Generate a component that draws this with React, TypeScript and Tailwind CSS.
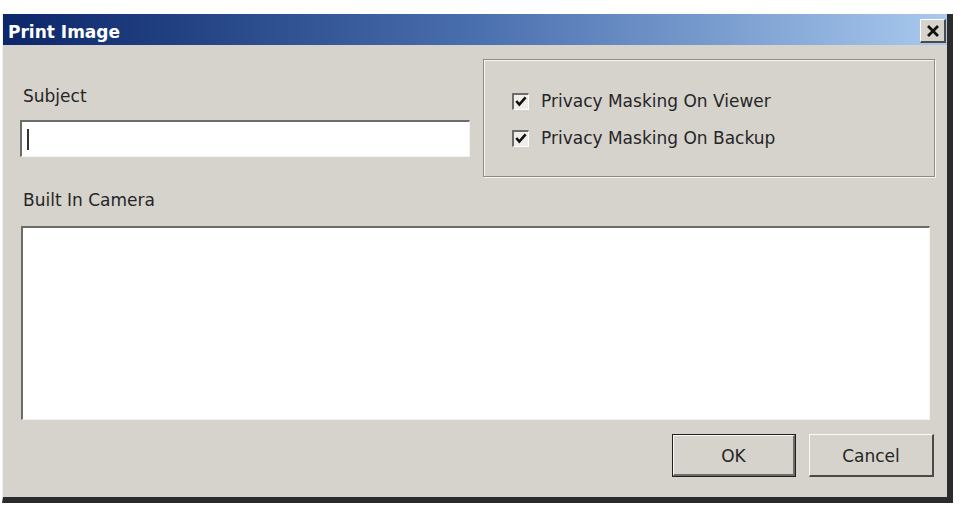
import React from 'react';

const font = { fontFamily: '"DejaVu Sans", Verdana, sans-serif' };

function CheckRow({ label }: { label: string }) {
  return (
    <div className="flex items-center h-[20px]">
      <div className="w-[17px] h-[17px] bg-[#efeeea] border-t-2 border-l-2 border-[#6e6c68] border-r border-b border-r-[#fff] border-b-[#fff] flex items-center justify-center">
        <svg width="12" height="11" viewBox="0 0 12 11">
          <path d="M1.3 5 L4.3 8.6 L10.6 1.4" fill="none" stroke="#111" strokeWidth="2.6" />
        </svg>
      </div>
      <span className="ml-[12px] text-[17px] text-[#262626] leading-[20px]">{label}</span>
    </div>
  );
}

export default function App() {
  return (
    <div className="w-[962px] h-[513px] bg-white overflow-hidden pt-[14px]" style={font}>
      {/* dialog window */}
      <div className="ml-[2px] w-[951px] h-[489px] flex flex-col border-l border-l-[#f2f1ee] border-r-[6px] border-r-[#2b2b2b] border-b-[6px] border-b-[#2b2b2b] bg-[#d6d3cd]">
        {/* title bar */}
        <div className="h-[31px] shrink-0 flex items-start justify-between pl-[5px] pr-[1px] bg-gradient-to-r from-[#0c2669] via-[#4a6fae] to-[#a9c9ee]">
          <span className="text-white font-bold text-[17px] leading-none mt-[10px]">Print Image</span>
          <div className="w-[26px] h-[24px] mt-[5px] bg-[#d6d3cd] border-t border-l border-[#ffffff] border-r-2 border-b-2 border-r-[#4a4a4a] border-b-[#4a4a4a] flex items-center justify-center">
            <svg width="14" height="12" viewBox="0 0 14 12">
              <path d="M2 1 L12 11 M12 1 L2 11" stroke="#111" strokeWidth="2.8" />
            </svg>
          </div>
        </div>

        {/* body */}
        <div className="flex-1 flex flex-col pl-[17px] pt-[14px]">
          <div className="flex items-start">
            <div className="w-[450px] pt-[27px]">
              <div className="text-[17px] text-[#262626] leading-[20px] pl-[3px]">Subject</div>
              <div className="mt-[14px] h-[37px] bg-white border-t-2 border-l-2 border-[#6e6c68] border-r border-b border-r-[#f4f3f0] border-b-[#f4f3f0] flex items-center pl-[5px]">
                <div className="w-[2px] h-[21px] bg-[#333]" />
              </div>
            </div>
            <div className="ml-[13px] w-[452px] h-[118px] border border-[#8d8b86] shadow-[inset_1px_1px_0_#f7f6f3,1px_1px_0_#f7f6f3] pl-[28px] pt-[31px] flex flex-col gap-[17px]">
              <CheckRow label="Privacy Masking On Viewer" />
              <CheckRow label="Privacy Masking On Backup" />
            </div>
          </div>

          <div className="mt-[13px] text-[17px] text-[#262626] leading-[20px] pl-[3px]">Built In Camera</div>
          <div className="mt-[16px] ml-[1px] w-[909px] h-[194px] bg-white border-t-2 border-l-2 border-[#6e6c68] border-r border-b border-r-[#f4f3f0] border-b-[#f4f3f0]" />

          <div className="mt-[14px] flex justify-end gap-[13px] pr-[13px]">
            <div className="w-[124px] h-[43px] border border-[#1f1f1f] flex">
              <div className="flex-1 pt-[4px] border-t border-l border-[#fbfaf8] border-r-2 border-b-2 border-r-[#6e6c68] border-b-[#6e6c68] flex items-center justify-center text-[17px] text-[#262626]">
                OK
              </div>
            </div>
            <div className="w-[125px] h-[43px] pt-[4px] border-t border-l border-[#fbfaf8] border-r-2 border-b-2 border-r-[#4a4a4a] border-b-[#4a4a4a] flex items-center justify-center text-[17px] text-[#262626]">
              Cancel
            </div>
          </div>
        </div>
      </div>
    </div>
  );
}
